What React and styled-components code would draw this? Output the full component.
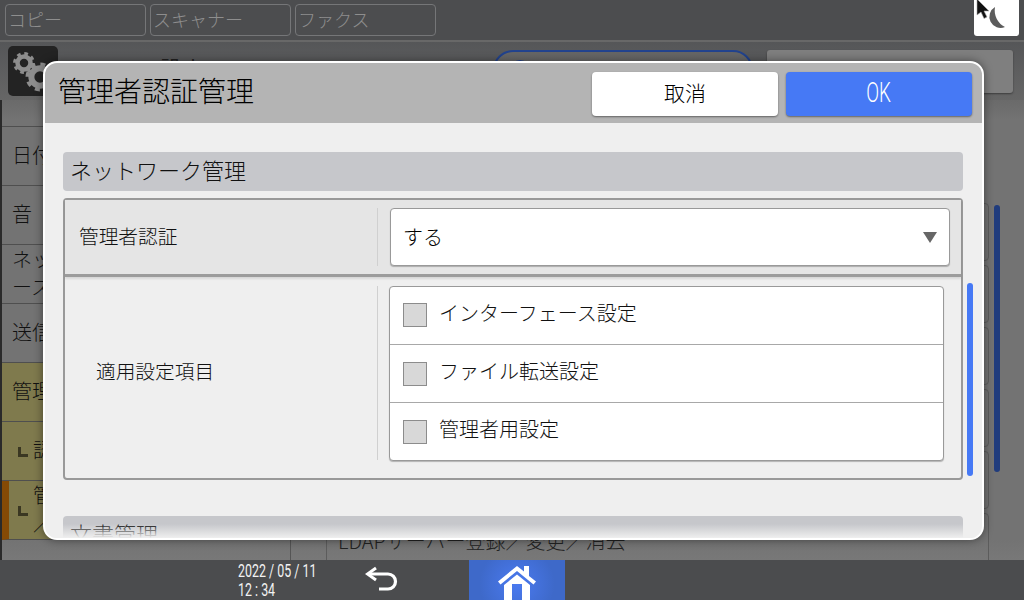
import React from "react";
import styled, { createGlobalStyle } from "styled-components";

const JP = `"Noto Sans CJK JP", "Noto Sans", sans-serif`;
const NARROW = `"Roboto", sans-serif`;

const GlobalStyle = createGlobalStyle`
  html, body {
    margin: 0;
    padding: 0;
    width: 1024px;
    height: 600px;
    overflow: hidden;
    background: #4c4d4f;
    font-family: ${JP};
  }
  * { box-sizing: border-box; }
`;

const Screen = styled.div`
  position: relative;
  width: 1024px;
  height: 600px;
  display: flex;
  flex-direction: column;
  overflow: hidden;
`;

const TopBar = styled.div`
  height: 42px;
  flex: none;
  display: flex;
  align-items: flex-start;
  gap: 4.5px;
  padding: 4px 5px 0 5px;
  background: #4c4d4f;
  border-bottom: 2px solid #686868;
`;

const Tab = styled.div`
  width: 140.500px;
  height: 32px;
  border: 1px solid #757678;
  border-radius: 4px;
  padding-left: 2px;
  font-size: 18px;
  line-height: 29px;
  font-weight: 300;
  color: #8e8e8e;
`;

const MoonTile = styled.div`
  position: relative;
  margin-left: auto;
  margin-top: -4px;
  width: 45px;
  height: 36px;
  background: #fff;
  border-radius: 0 0 3px 3px;
`;

const Cursor = styled.svg`
  position: absolute;
  left: 0;
  top: 0;
`;

const SubHeader = styled.div`
  height: 58px;
  flex: none;
  display: flex;
  align-items: flex-start;
  padding: 4px 11px 0 8px;
  background: linear-gradient(#555658, #666);
`;

const GearTile = styled.div`
  width: 50px;
  height: 50px;
  border-radius: 5px;
  background: #232323;
`;

const HeaderTitle = styled.div`
  margin-left: 102px;
  padding-top: 5px;
  width: 44px;
  font-size: 22px;
  color: #222;
`;

const SearchPill = styled.div`
  margin-left: 289px;
  margin-top: 4px;
  width: 260px;
  height: 50px;
  padding: 8px 0 0 15px;
  border: 2px solid #22438e;
  border-radius: 20px 20px 0 0;
  background: linear-gradient(#666, #777);
`;

const SearchDot = styled.div`
  width: 20px;
  height: 20px;
  border: 3px solid #22438e;
  border-radius: 50%;
`;

const StatusBox = styled.div`
  margin-left: 14px;
  margin-top: 4px;
  width: 246px;
  height: 43px;
  border-radius: 3px;
  background: #7f7f7f;
  box-shadow: 0 1px 2px rgba(0, 0, 0, 0.4);
`;

const Body = styled.div`
  flex: 1;
  min-height: 0;
  display: flex;
  background: linear-gradient(#6a6a6a, #737373 20px, #737373 440px, #787878);
  overflow: hidden;
`;

const Sidebar = styled.div`
  width: 291px;
  flex: none;
  padding-left: 2px;
  border-right: 1px solid #555;
  background: linear-gradient(to right, #2a2a2a 2px, transparent 2px);
`;

const SideTop = styled.div`
  height: 27px;
  border-bottom: 1px solid #4f4f4f;
`;

const SideRow = styled.div`
  height: 59px;
  display: flex;
  align-items: center;
  gap: 5px;
  padding-left: ${(p) => (p.$mark ? "9px" : p.$sub ? "16px" : "10px")};
  padding-bottom: 2px;
  border-bottom: 1px solid #4f4f4f;
  font-size: 20px;
  line-height: 28px;
  font-weight: 300;
  color: #111;
  background: ${(p) => (p.$olive ? "#7f7a4d" : "transparent")};
  border-left: ${(p) => (p.$mark ? "7px solid #854a05" : "none")};
`;

const Indent = styled.span`
  flex: none;
  width: 10px;
  height: 10px;
  margin-top: 3px;
  border-left: 3px solid #3a3722;
  border-bottom: 3px solid #3a3722;
`;

const Main = styled.div`
  flex: 1;
  display: flex;
  gap: 5px;
  padding: 103px 24px 0 35px;
`;

const MainList = styled.div`
  flex: 1;
  display: flex;
  flex-direction: column;
  gap: 4px;
`;

const MainRow = styled.div`
  height: 58px;
  flex: none;
  display: flex;
  align-items: center;
  padding: 0 0 3px 11px;
  border: 1px solid #5c5c5c;
  border-radius: 4px;
  font-weight: 300;
  color: #222;
`;

const RowText = styled.span`
  font-family: ${JP};
  font-size: 20px;
`;

const MainScroll = styled.div`
  width: 6px;
  height: 267px;
  margin-top: 2px;
  flex: none;
  border-radius: 3px;
  background: #203c7d;
`;

const BottomBar = styled.div`
  height: 40px;
  flex: none;
  display: flex;
  background: #4b4c4e;
`;

const DateCell = styled.div`
  margin-left: 238px;
  width: 127px;
  padding-top: 1px;
`;

const DateText = styled.div`
  font-family: ${NARROW};
  font-size: 18px;
  line-height: 19px;
  color: #f2f2f2;
  white-space: nowrap;
  transform: scaleX(0.69);
  transform-origin: left center;
`;

const BackButton = styled.div`
  width: 104px;
  display: flex;
  align-items: center;
`;

const HomeButton = styled.div`
  width: 96px;
  display: flex;
  align-items: flex-end;
  justify-content: center;
  background: radial-gradient(circle at 50% 60%, #4a7af0, #3e69c9 70%);
`;

const Dialog = styled.div`
  position: absolute;
  left: 43px;
  top: 61px;
  width: 941px;
  height: 479px;
  display: flex;
  flex-direction: column;
  border: 2px solid #fff;
  border-radius: 14px;
  background: #efefef;
  overflow: hidden;
  box-shadow: 0 0 10px rgba(0, 0, 0, 0.45);
`;

const DialogHead = styled.div`
  height: 60px;
  flex: none;
  display: flex;
  align-items: flex-start;
  gap: 8px;
  padding: 9px 10px 0 13px;
  background: #b4b4b4;
`;

const DialogTitle = styled.div`
  flex: 1;
  font-size: 28px;
  line-height: 37px;
  font-weight: 300;
  color: #000;
`;

const HeadButton = styled.div`
  width: 186px;
  height: 44px;
  display: flex;
  align-items: center;
  justify-content: center;
  padding-bottom: 5px;
  border-radius: 4px;
  font-size: 21px;
  font-weight: 300;
  color: ${(p) => (p.$primary ? "#fff" : "#000")};
  background: ${(p) => (p.$primary ? "#4679f5" : "#fff")};
  box-shadow: 0 1px 2px rgba(0, 0, 0, 0.45);
`;

const OkText = styled.span`
  display: inline-block;
  margin-top: 3px;
  font-family: ${NARROW};
  font-size: 27px;
  transform: scaleX(0.7);
`;

const DialogBody = styled.div`
  position: relative;
  flex: 1;
  min-height: 0;
  padding: 29px 0 0 18px;
  display: flex;
  gap: 4px;
  overflow: hidden;
`;

const Content = styled.div`
  width: 900px;
  flex: none;
`;

const SectionHead = styled.div`
  height: 39px;
  padding-left: 7px;
  border-radius: 4px;
  background: #c6c7cb;
  font-size: 22px;
  line-height: 35px;
  font-weight: 300;
  color: #111;
`;

const Panel = styled.div`
  margin-top: 7px;
  height: 282px;
  margin-bottom: 36px;
  border: 2px solid #999;
  border-radius: 4px;
`;

const SwitchRow = styled.div`
  height: 77px;
  display: flex;
  align-items: center;
  background: #e5e5e5;
  border-bottom: 3px solid #9c9c9c;
  box-shadow: 0 2px 2px rgba(0, 0, 0, 0.1);
`;

const RowLabel = styled.div`
  width: 313px;
  height: 58px;
  flex: none;
  display: flex;
  align-items: center;
  padding-left: ${(p) => p.$inset}px;
  padding-bottom: 4px;
  border-right: 1px solid #d0d0d0;
  font-size: 19.700px;
  font-weight: 300;
  color: #111;
`;

const Select = styled.div`
  margin-left: 12px;
  width: 560px;
  height: 58px;
  display: flex;
  align-items: center;
  justify-content: space-between;
  padding: 0 12px 2px 12px;
  background: #fff;
  border: 1px solid #999;
  border-radius: 4px;
  box-shadow: 0 1px 1px rgba(0, 0, 0, 0.25);
  font-size: 20px;
  font-weight: 300;
  color: #000;
`;

const Caret = styled.span`
  width: 0;
  height: 0;
  margin-top: 2px;
  border-left: 7px solid transparent;
  border-right: 7px solid transparent;
  border-top: 11px solid #666;
`;

const ItemsRow = styled.div`
  display: flex;
  padding-top: 9px;
`;

const ItemsLabel = styled(RowLabel)`
  height: 174px;
  padding-bottom: 6px;
`;

const CheckList = styled.div`
  margin-left: 11px;
  width: 555px;
  height: 175px;
  background: #fff;
  border: 1px solid #999;
  border-radius: 4px;
  box-shadow: 0 1px 1px rgba(0, 0, 0, 0.25);
`;

const CheckRow = styled.div`
  height: 58px;
  display: flex;
  align-items: center;
  gap: 12px;
  padding-left: 13px;
  font-size: 20px;
  font-weight: 300;
  color: #111;
  &:first-child {
    margin-top: -1px;
  }
  & + & {
    border-top: 1px solid #a8a8a8;
  }
`;

const CheckBox = styled.span`
  flex: none;
  width: 24px;
  height: 24px;
  border: 1px solid #8c8c8c;
  background: #d8d8d8;
`;

const CheckLabel = styled.span`
  margin-top: -6px;
`;

const DialogScroll = styled.div`
  width: 6px;
  height: 193px;
  margin-top: 131px;
  flex: none;
  border-radius: 3px;
  background: #4679f5;
`;

const BottomFade = styled.div`
  position: absolute;
  left: 0;
  right: 0;
  bottom: 0;
  height: 14px;
  background: linear-gradient(rgba(239, 239, 239, 0), #efefef);
`;

// 歯車: 太い破線の輪を歯にして、その内側にリングを描く
const Gear = ({ cx, cy, r }) => (
  <g fill="none" stroke="#8d8d8d">
    <circle
      cx={cx}
      cy={cy}
      r={r}
      strokeWidth={r * 0.42}
      strokeDasharray={`${(2 * Math.PI * r) / 16} ${(2 * Math.PI * r) / 16}`}
    />
    <circle cx={cx} cy={cy} r={r * 0.72} strokeWidth={r * 0.5} />
  </g>
);

const checkItems = ["インターフェース設定", "ファイル転送設定", "管理者用設定"];

export default function App() {
  return (
    <Screen>
      <GlobalStyle />
      <TopBar>
        <Tab>コピー</Tab>
        <Tab>スキャナー</Tab>
        <Tab>ファクス</Tab>
        <MoonTile>
          <Cursor width="45" height="36" viewBox="0 0 45 36">
            <path d="M21 7 A11.200 11.200 0 0 0 31 27 A18.700 18.700 0 0 1 21 7 Z" fill="#5c5c5c" />
            <path
              d="M3 -1 L3 15 L7 12 L10 18.500 L13 17 L10 11 L15 11 Z"
              fill="#111"
              stroke="#aaa"
              strokeWidth="0.6"
            />
          </Cursor>
        </MoonTile>
      </TopBar>
      <SubHeader>
        <GearTile>
          <svg width="50" height="50" viewBox="0 0 50 50">
            <Gear cx={16} cy={17} r={9} />
            <Gear cx={32} cy={31} r={12} />
          </svg>
        </GearTile>
        <HeaderTitle>設定</HeaderTitle>
        <SearchPill>
          <SearchDot />
        </SearchPill>
        <StatusBox />
      </SubHeader>
      <Body>
        <Sidebar>
          <SideTop />
          <SideRow>日付／時刻</SideRow>
          <SideRow>音</SideRow>
          <SideRow>
            <span>
              ネットワーク／インターフェ
              <br />
              ース
            </span>
          </SideRow>
          <SideRow>送信</SideRow>
          <SideRow $olive>管理者向け設定</SideRow>
          <SideRow $olive $sub>
            <Indent />
            認証管理
          </SideRow>
          <SideRow $olive $sub $mark>
            <Indent />
            <span>
              管理者認証管理
              <br />
              ／変更
            </span>
          </SideRow>
        </Sidebar>
        <Main>
          <MainList>
            <MainRow />
            <MainRow />
            <MainRow />
            <MainRow />
            <MainRow />
            <MainRow>
              <RowText>LDAPサーバー登録／変更／消去</RowText>
            </MainRow>
          </MainList>
          <MainScroll />
        </Main>
      </Body>
      <BottomBar>
        <DateCell>
          <DateText>
            2022 / 05 / 11
            <br />
            12 : 34
          </DateText>
        </DateCell>
        <BackButton>
          <svg width="34" height="28" viewBox="0 0 34 28" fill="none">
            <path d="M11 2 L2.500 8 L11 14" stroke="#fff" strokeWidth="3" />
            <path d="M4 8 H23 a7.500 7.500 0 0 1 0 15 H14" stroke="#fff" strokeWidth="3.200" />
          </svg>
        </BackButton>
        <HomeButton>
          <svg width="38" height="35" viewBox="0 0 38 35">
            <path
              d="M0 16.500 L19 1 L26 6.500 V1 H31 V11 L38 16.500 L35.500 19.500 L19 6 L2.500 19.500 Z"
              fill="#fff"
            />
            <path d="M6 20 L19 9.500 L32 20 V35 H24 V19 H14 V35 H6 Z" fill="#fff" />
          </svg>
        </HomeButton>
      </BottomBar>
      <Dialog>
        <DialogHead>
          <DialogTitle>管理者認証管理</DialogTitle>
          <HeadButton>取消</HeadButton>
          <HeadButton $primary>
            <OkText>OK</OkText>
          </HeadButton>
        </DialogHead>
        <DialogBody>
          <Content>
            <SectionHead>ネットワーク管理</SectionHead>
            <Panel>
              <SwitchRow>
                <RowLabel $inset={14}>管理者認証</RowLabel>
                <Select>
                  する
                  <Caret />
                </Select>
              </SwitchRow>
              <ItemsRow>
                <ItemsLabel $inset={31}>適用設定項目</ItemsLabel>
                <CheckList>
                  {checkItems.map((item) => (
                    <CheckRow key={item}>
                      <CheckBox />
                      <CheckLabel>{item}</CheckLabel>
                    </CheckRow>
                  ))}
                </CheckList>
              </ItemsRow>
            </Panel>
            <SectionHead>文書管理</SectionHead>
          </Content>
          <DialogScroll />
          <BottomFade />
        </DialogBody>
      </Dialog>
    </Screen>
  );
}
